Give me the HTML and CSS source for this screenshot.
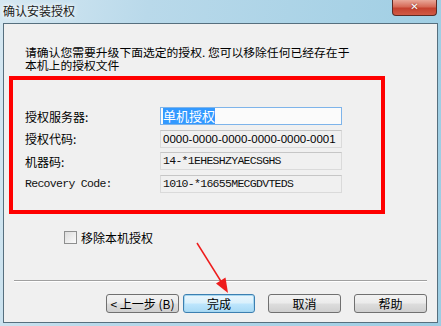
FILE: index.html
```html
<!DOCTYPE html>
<html lang="zh-CN">
<head>
    <meta charset="UTF-8">
    <title>确认安装授权</title>
    <link rel="stylesheet" href="styles.css">
</head>
<body>

    <div class="window">
        <div class="titlebar">
            <span class="title">确认安装授权</span>
            <div class="close">✕</div>
        </div>

        <div class="client">
            <p class="intro">请确认您需要升级下面选定的授权. 您可以移除任何已经存在于<br>本机上的授权文件</p>

            <div class="red-box">
                <div class="row">
                    <span class="label">授权服务器:</span>
                    <div class="field focused"><span class="selected">单机授权</span></div>
                </div>
                <div class="row">
                    <span class="label">授权代码:</span>
                    <div class="field sans">0000-0000-0000-0000-0000-0001</div>
                </div>
                <div class="row">
                    <span class="label">机器码:</span>
                    <div class="field mono">14-*1EHESHZYAECSGHS</div>
                </div>
                <div class="row">
                    <span class="label mono">Recovery Code:</span>
                    <div class="field mono">1010-*16655MECGDVTEDS</div>
                </div>
            </div>

            <label class="check-row">
                <span class="checkbox"></span>
                <span>移除本机授权</span>
            </label>

            <div class="separator"></div>

            <div class="buttons">
                <div class="button">&lt; 上一步 (<u>B</u>)</div>
                <div class="button default">完成</div>
                <div class="button spaced">取消</div>
                <div class="button spaced">帮助</div>
            </div>

            <svg class="arrow" width="60" height="70" viewBox="0 0 60 70">
                <line x1="2" y1="4" x2="27" y2="44" stroke="#ee1c1c" stroke-width="1.5"/>
                <polygon points="33,54 30.5,38.5 21,44.5" fill="#ee1c1c"/>
            </svg>
        </div>
    </div>

</body>
</html>
```

FILE: styles.css
```css
body {
    margin: 0;
    padding: 0;
    font-family: "Noto Sans CJK SC", sans-serif;
    font-size: 12px;
    color: #000;
}

.window {
    width: 441px;
    height: 326px;
    box-sizing: border-box;
    padding: 0 3px 3px 3px;
    background: linear-gradient(100deg, #d6e8f2 0%, #b9d9ea 30%, #a8d2e6 70%, #9ccde3 100%);
}

.titlebar {
    height: 23px;
    display: flex;
    justify-content: space-between;
    align-items: flex-start;
}

.title {
    font-size: 12px;
    line-height: 12px;
    margin-top: 5px;
    color: #1a1a1a;
    text-shadow: 0 0 4px #fff, 0 0 6px #fff;
}

.close {
    width: 43px;
    height: 15px;
    margin-right: 1px;
    border: 1px solid #5b2b25;
    border-top: none;
    border-radius: 0 0 4px 4px;
    background: linear-gradient(#e9a899 0%, #d66a57 45%, #c5422f 55%, #d05a45 100%);
    color: #fff;
    font-family: "DejaVu Sans", sans-serif;
    font-size: 10px;
    font-weight: bold;
    line-height: 14px;
    text-align: center;
    text-shadow: 0 0 2px #6b1d12;
}

.client {
    position: relative;
    height: 300px;
    box-sizing: border-box;
    background: #f0f0f0;
    border: 1px solid #566f7e;
    padding: 0 10px 0 0;
}

.intro {
    margin: 21px 0 0 21px;
    font-size: 11.8px;
    line-height: 13px;
}

.red-box {
    width: 376px;
    height: 138px;
    box-sizing: border-box;
    margin: 5px 0 0 5px;
    border: 4px solid #ff0000;
    padding: 27px 0 0 12px;
    display: flex;
    flex-direction: column;
    gap: 4.5px;
}

.row {
    display: flex;
    align-items: center;
    height: 18px;
}

.label {
    width: 135px;
}

.field {
    width: 182px;
    height: 18px;
    box-sizing: border-box;
    border: 1px solid #dadada;
    border-top-color: #c6c6c6;
    background: #f0f0f0;
    padding: 0 2px;
    line-height: 16px;
    white-space: nowrap;
    overflow: hidden;
}

.field.focused {
    border-color: #7eb4ea;
    background: #fbfbfb;
    font-size: 13px;
}

.selected {
    background: #3399ff;
    color: #fff;
}

.sans {
    font-family: "Liberation Sans", sans-serif;
    font-size: 11.5px;
}

.mono {
    font-family: "Liberation Mono", monospace;
    font-size: 11.5px;
    letter-spacing: -0.7px;
    color: #111;
}

.check-row {
    display: flex;
    align-items: center;
    gap: 4px;
    margin: 15px 0 0 60px;
}

.checkbox {
    width: 11px;
    height: 11px;
    border: 1px solid #8e8f8f;
    background: linear-gradient(135deg, #dcdcdc, #fbfbfb);
}

.separator {
    margin: 34px 0 0 10px;
    width: 413px;
    height: 1px;
    background: #a0a0a0;
    border-bottom: 1px solid #fff;
}

.buttons {
    display: flex;
    justify-content: flex-end;
    gap: 4px;
    margin-top: 12px;
}

.button {
    width: 73px;
    height: 19px;
    box-sizing: border-box;
    border: 1px solid #707070;
    border-radius: 3px;
    background: linear-gradient(#f2f2f2 0%, #ebebeb 48%, #dddddd 52%, #cfcfcf 100%);
    text-align: center;
    line-height: 17px;
    font-size: 12px;
}

.button u {
    text-decoration: none;
}

.button.default {
    width: 72px;
    border-color: #3c7fb1;
    box-shadow: inset 0 0 0 1px #a6d7f0;
    background: linear-gradient(#eaf6fd 0%, #d9f0fc 48%, #bee6fd 52%, #a7d9f5 100%);
}

.button.spaced {
    margin-left: 9px;
}

.arrow {
    position: absolute;
    left: 191px;
    top: 215px;
}
```
